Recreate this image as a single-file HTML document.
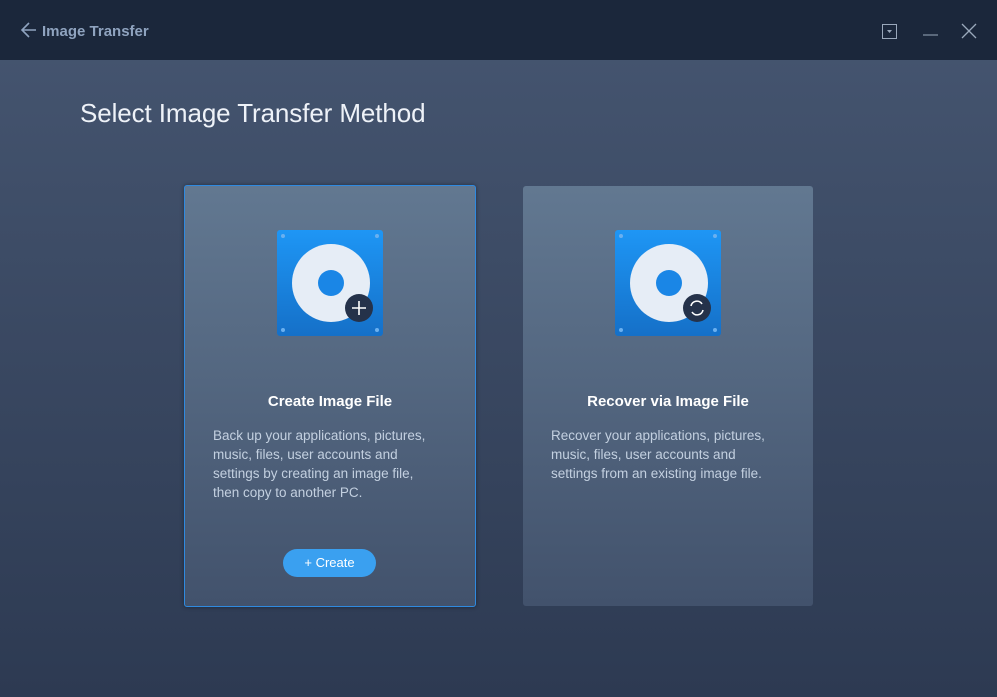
<!DOCTYPE html>
<html><head><style>
body{margin:0;width:997px;height:697px;overflow:hidden;font-family:"Liberation Sans",sans-serif;background:linear-gradient(#465671,#2d3a52);position:relative}
.top{position:absolute;left:0;top:0;width:997px;height:60px;background:#1b273b}
.title{position:absolute;left:42px;top:23px;color:#8fa3bf;font-size:15px;font-weight:bold}
h1{position:absolute;left:80px;top:98px;margin:0;font-weight:normal;color:#eef2f8;font-size:26px;letter-spacing:-0.1px}
.card{position:absolute;top:186px;width:290px;height:420px;background:linear-gradient(#627891,#42526c);border-radius:3px}
.card.sel{border:1px solid #2f8ae0;box-shadow:0 0 4px rgba(0,0,0,.4);top:185px;height:420px}
.card h2{position:absolute;top:207px;left:0;right:0;text-align:center;font-size:15px;color:#fff;margin:0}
.card p{position:absolute;top:240px;left:28px;margin:0;font-size:13.5px;line-height:19px;color:#c3d0e0;white-space:nowrap}
.btn{position:absolute;left:98px;top:363px;width:93px;height:28px;border-radius:14px;background:#3aa0f0;color:#fff;font-size:13px;text-align:center;line-height:28px}
svg.ic{position:absolute;left:92px;top:44px}
</style></head><body>
<div class="top"></div>
<svg style="position:absolute;left:20px;top:22px" width="18" height="16"><path d="M9 1L2 8L9 15M2 8H16" stroke="#8fa3bf" stroke-width="1.6" fill="none"/></svg>
<div class="title">Image Transfer</div>
<svg style="position:absolute;left:880px;top:22px" width="100" height="18"><rect x="2.5" y="2.5" width="14" height="14" fill="none" stroke="#9aa8bb"/><path d="M7 8h5l-2.5 3z" fill="#9aa8bb"/><path d="M43 13h15" stroke="#9aa8bb"/><path d="M82 2l14 14M96 2L82 16" stroke="#9aa8bb" stroke-width="1.3"/></svg>
<h1>Select Image Transfer Method</h1>
<div class="card sel" style="left:184px">
<svg class="ic" width="108" height="108"><defs><linearGradient id="g" x1="0" y1="0" x2="0" y2="1"><stop offset="0" stop-color="#1e96f5"/><stop offset="1" stop-color="#1570c8"/></linearGradient></defs><rect x="0" y="0" width="106" height="106" rx="3" fill="url(#g)"/><circle cx="6" cy="6" r="2" fill="#6ab0f0"/><circle cx="100" cy="6" r="2" fill="#6ab0f0"/><circle cx="6" cy="100" r="2" fill="#6ab0f0"/><circle cx="100" cy="100" r="2" fill="#6ab0f0"/><circle cx="54" cy="53" r="39" fill="#e6edf6"/><circle cx="54" cy="53" r="13" fill="#1a86e6"/><circle cx="82" cy="78" r="14" fill="#25324a"/><path d="M82 71v14M75 78h14" stroke="#fff" stroke-width="1.6"/></svg>
<h2>Create Image File</h2>
<p>Back up your applications, pictures,<br>music, files, user accounts and<br>settings by creating an image file,<br>then copy to another PC.</p>
<div class="btn">+ Create</div>
</div>
<div class="card" style="left:523px">
<svg class="ic" width="108" height="108"><rect x="0" y="0" width="106" height="106" rx="3" fill="url(#g)"/><circle cx="6" cy="6" r="2" fill="#6ab0f0"/><circle cx="100" cy="6" r="2" fill="#6ab0f0"/><circle cx="6" cy="100" r="2" fill="#6ab0f0"/><circle cx="100" cy="100" r="2" fill="#6ab0f0"/><circle cx="54" cy="53" r="39" fill="#e6edf6"/><circle cx="54" cy="53" r="13" fill="#1a86e6"/><circle cx="82" cy="78" r="14" fill="#25324a"/><path d="M76 76a6 6 0 0 1 11-2M88 80a6 6 0 0 1-11 2" stroke="#fff" stroke-width="1.6" fill="none"/></svg>
<h2>Recover via Image File</h2>
<p>Recover your applications, pictures,<br>music, files, user accounts and<br>settings from an existing image file.</p>
</div>
</body></html>
